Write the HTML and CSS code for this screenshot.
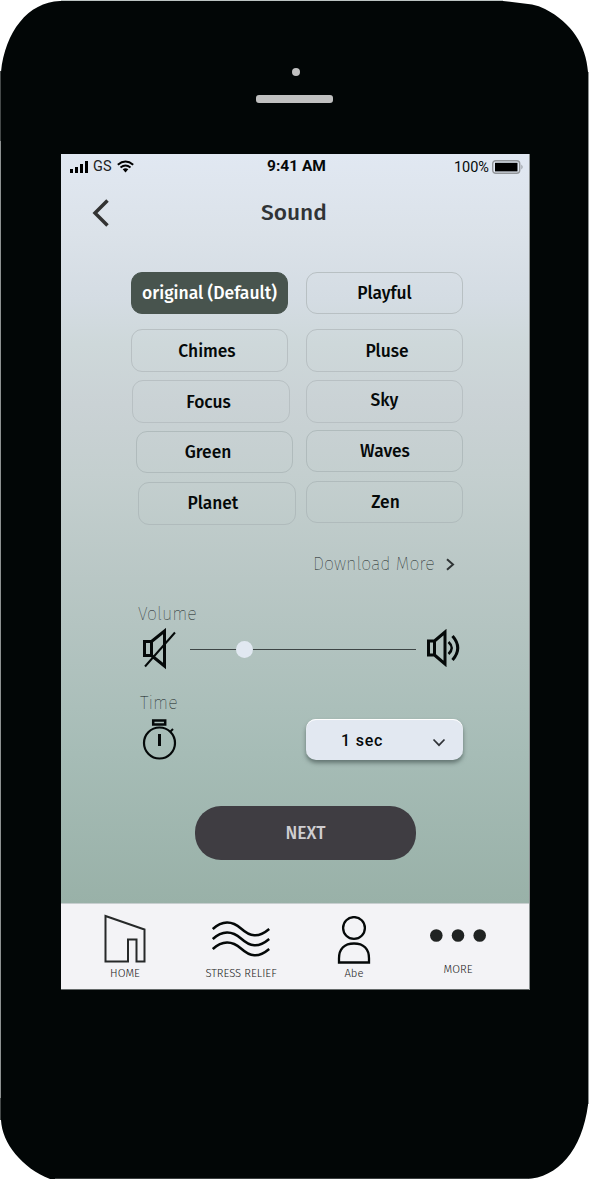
FILE: index.html
```html
<!DOCTYPE html>
<html lang="en">
<head>
<meta charset="utf-8">
<title>Sound</title>
<link rel="stylesheet" href="styles.css">
</head>
<body>
<div class="phone">
  <svg class="shell" viewBox="0 0 589 1179" preserveAspectRatio="none">
    <path fill="#020606" d="M60 1H503L532 4.500Q539 5.500 545 9C572 23 586 45 588 72V1105C582 1150 558 1178 526 1179H50C22 1168 2 1143 1 1120V72C5 32 28 2 60 1Z"/>
    <path d="M61 .5H503" stroke="#bcc3c2"/>
    <path d="M.5 71V141M.5 1098V1120" stroke="#454949"/><path d="M.5 141V1098M588.500 72V1104" stroke="#8d9191"/>
    <path d="M55 1178.500H528" stroke="#3c4040"/>
  </svg>
  <div class="camera"></div>
  <div class="speaker"></div>
  <main class="screen">
    <div class="status">
      <div class="carrier">
        <svg width="18" height="13" viewBox="0 0 18 13"><path d="M0 9h3v4H0zM5 7h3v6H5zM10 4h3v9h-3zM15 1h3v12h-3z"/></svg>
        <span>GS</span>
        <svg width="17" height="13" viewBox="0 0 17 13" fill="none" stroke="#000" stroke-width="2"><path d="M.8 4.700Q8.500-1.700 16.200 4.700M3.500 7.500Q8.500 3.500 13.500 7.500"/><path d="M5.700 9.300Q8.500 7.300 11.300 9.300L8.500 12.500Z" fill="#000" stroke="none"/></svg>
      </div>
      <span class="clock">9:41 AM</span>
      <div class="battery">
        <span>100%</span>
        <svg width="32" height="14" viewBox="0 0 32 14"><rect x=".7" y=".7" width="27" height="12.600" rx="3" fill="none" stroke="#929599" stroke-width="1.400"/><rect x="3" y="2.800" width="22.500" height="8.600"/><path d="M29.500 4.500q2 2.500 0 5z" fill="#858a8d"/></svg>
      </div>
    </div>
    <header class="header">
      <svg width="18" height="28" viewBox="0 0 18 28" fill="none" stroke="#333" stroke-width="3.500"><path d="M15.500 1.500 3 14l12.500 12.500"/></svg>
      <h1>Sound</h1>
    </header>
    <section class="sounds">
      <div class="column">
        <button class="option selected"><span>original (Default)</span></button>
        <button class="option chimes"><span>Chimes</span></button>
        <button class="option focus"><span>Focus</span></button>
        <button class="option green"><span>Green</span></button>
        <button class="option planet"><span>Planet</span></button>
      </div>
      <div class="column right">
        <button class="option playful"><span>Playful</span></button>
        <button class="option pluse"><span>Pluse</span></button>
        <button class="option sky"><span>Sky</span></button>
        <button class="option waves"><span>Waves</span></button>
        <button class="option zen"><span>Zen</span></button>
      </div>
    </section>
    <div class="download"><span>Download More</span><svg width="9" height="13" viewBox="0 0 9 13" fill="none" stroke="#303536" stroke-width="2"><path d="m1 1.200 6 5.300-6 5.300"/></svg></div>
    <div class="label volume-label">Volume</div>
    <div class="volume">
      <svg width="36" height="42" viewBox="0 0 36 42" fill="none" stroke="#050909"><path d="M2.500 13.500h7v14h-7zM9.500 13.500 22.500 3v35L9.500 27.500" stroke-width="3"/><path d="M3 38.500 33 4.500" stroke-width="2"/></svg>
      <div class="track"><i class="thumb"></i></div>
      <svg class="loud" width="36" height="38" viewBox="0 0 36 38" fill="none" stroke="#050909" stroke-width="3"><path d="M2.500 12h6v14h-6zM8.500 12 19 3v32L8.500 26"/><path d="M22.500 13q6.500 6 0 12" stroke-width="2.500"/><path d="M26.500 7q10.500 12 0 24"/></svg>
    </div>
    <div class="label time-label">Time</div>
    <div class="time">
      <svg width="36" height="42" viewBox="0 0 36 42" fill="none" stroke="#050909"><path d="M11.200 1.500h12v4h-12z" stroke-width="2.500"/><circle cx="17.500" cy="24" r="15.500" stroke-width="2.200"/><path d="M17.500 15V27" stroke-width="3"/><path d="m28 13 3-3" stroke-width="2"/></svg>
      <button class="select"><span>1 sec</span><svg width="14" height="9" viewBox="0 0 14 9" fill="none" stroke="#303338" stroke-width="1.700"><path d="m1.500 1.500 5.500 5.700 5.500-5.700"/></svg></button>
    </div>
    <button class="next">NEXT</button>
    <nav class="tabs">
      <a class="tab home"><svg width="42" height="50" viewBox="0 0 42 50" fill="none" stroke="#262929" stroke-width="2"><path d="M1.500 2 40.500 15.500V47.500H32.500V25.500h-8.500V47.500H1.500Z"/></svg><span>HOME</span></a>
      <a class="tab relief"><svg width="58" height="36" viewBox="0 0 58 36" fill="none" stroke="#050909" stroke-width="2.500"><path id="wave" d="M.8 8C10-.5 20-.5 29 7.500S46 17.500 57.200 8"/><use href="#wave" y="10"/><use href="#wave" y="20"/></svg><span>STRESS RELIEF</span></a>
      <a class="tab profile"><svg width="34" height="48" viewBox="0 0 34 48" fill="none" stroke="#050909" stroke-width="2.300"><circle cx="17" cy="12" r="10.900"/><path d="M2 46.500v-4c0-9.500 5.500-15 15-15s15 5.500 15 15v4Z"/></svg><span>Abe</span></a>
      <a class="tab more"><svg width="56" height="13" viewBox="0 0 56 13" fill="#202322"><circle cx="6.300" cy="6.500" r="6.300"/><circle cx="28" cy="6.500" r="6.300"/><circle cx="49.700" cy="6.500" r="6.300"/></svg><span>MORE</span></a>
    </nav>
  </main>
</div>
</body>
</html>
```
FILE: styles.css
```css
* { box-sizing: border-box; }
body { margin: 0; background: #fff; font-family: "Fira Sans", "Noto Sans", sans-serif; color: #050909; }
svg { display: block; flex: none; }
button { font: inherit; color: inherit; border: 0; padding: 0; background: none; }
.phone { position: relative; width: 589px; height: 1179px; display: flex; flex-direction: column; overflow: hidden; isolation: isolate; }
.shell { position: absolute; inset: 0; width: 100%; height: 100%; z-index: -1; }
.camera { width: 8px; height: 8px; border-radius: 50%; background: #c0c0c0; margin: 67.500px 0 0 291.500px; }
.speaker { width: 77px; height: 8px; border-radius: 3px; background: #c0c0c0; margin: 19.500px 0 0 256px; }
.screen { width: 469px; height: 836px; margin: 51px 0 0 61px; display: flex; flex-direction: column; background: linear-gradient(#e1e8f2 0, #dbe2e9 80px, #d4dce3 145px, #ced8da 190px, #cad2d5 250px, #c4cfcf 320px, #b9c7c5 425px, #a6bcb6 600px, #99b1a8 749px); border-right: 1px solid #8b9091; }
.status { height: 24px; display: flex; align-items: center; font-family: Roboto, sans-serif; font-size: 14.500px; padding: 0 5px 0 9px; }
.carrier, .battery { display: flex; align-items: center; gap: 5px; width: 150px; }
.carrier span { color: #222; }
.clock { width: 153px; text-align: center; font-size: 15.500px; font-weight: 700; }
.battery { justify-content: flex-end; gap: 3px; padding-top: 2px; width: 151px; }
.header { display: flex; align-items: center; height: 69px; padding: 1px 0 0 31px; }
.header h1 { margin: 0 0 0 151px; font-size: 22.700px; font-weight: 500; line-height: 28px; color: #303335; }
.sounds { display: flex; gap: 18px; margin: 25px 0 0 70px; height: 253px; }
.column { width: 157px; }
.option { display: flex; align-items: center; justify-content: center; width: 157px; height: 42px; border: 1px solid #b8c0c3; border-radius: 11px; font-size: 17.400px; font-weight: 500; white-space: nowrap; padding-top: 1px; }
.selected { background: #48544e; border-color: #48544e; color: #fff; font-size: 17.500px; }
.chimes, .pluse { height: 43px; margin-top: 15px; }
.focus, .sky { height: 43px; margin-top: 8px; }
.chimes { padding-right: 5px; }
.pluse { padding-left: 1px; padding-right: 0; }
.focus { margin-left: 1px; padding-right: 5px; width: 158px; }
.sky { padding-bottom: 3px; }
.green { margin: 8px 0 0 5px; padding-right: 13px; }
.planet { margin: 9px 0 0 7px; width: 158px; height: 43px; padding: 0 8px 1px 0; }
.waves { margin-top: 7px; padding-left: 1px; }
.pluse { padding-left: 5px; }
.zen { margin-top: 9px; padding-left: 2px; }
.green, .planet, .waves, .zen { border-color: #b0bbbc; }
.download { display: flex; align-items: center; gap: 11px; height: 24px; margin: 27px 0 0 252px; font-weight: 200; font-size: 17.800px; color: #10181a; }
.label { height: 24px; line-height: 24px; font-weight: 200; font-size: 17.800px; color: #10181a; }
.volume-label { margin: 26px 0 0 77px; }
.volume { display: flex; align-items: center; height: 42px; margin: 2px 0 0 81px; }
.track { position: relative; width: 226px; height: 1px; margin-left: 12px; background: #3d4545; }
.thumb { position: absolute; left: 46px; top: -8px; width: 17px; height: 17px; border-radius: 50%; background: #e1e8f1; }
.loud { margin: -2px 0 0 10px; }
.time-label { margin: 21px 0 0 79px; }
.time { display: flex; height: 42px; margin: 4px 0 0 81px; }
.select { display: flex; align-items: center; width: 157px; height: 41px; margin-left: 128px; padding: 2px 17px 0 35px; justify-content: space-between; border-radius: 10px; background: #e2e8f1; box-shadow: inset 0 1px #fff, 0 3px 4px rgba(45,60,58,.55); font: 500 16px Roboto, sans-serif; letter-spacing: .8px; }
.select svg { margin-top: 3px; }
.next { width: 221px; height: 54px; margin: 45px 0 0 134px; border-radius: 26px; background: #3f3d42; color: #cfced1; font-weight: 500; font-size: 17.500px; }
.tabs { display: flex; height: 87px; margin-top: auto; background: #f3f3f6; border-top: 1px solid #c7cecf; border-bottom: 1px solid #656a6a; flex: none; }
.tab { display: flex; flex-direction: column; align-items: center; font-weight: 300; font-size: 11.300px; line-height: 14px; color: #222; white-space: nowrap; }
.home { width: 42px; margin-left: 43px; padding-top: 10px; }
.home span { margin-top: 2px; }
.relief { width: 72px; margin-left: 59px; padding-top: 17px; }
.relief span { margin-top: 9px; }
.profile { width: 34px; margin-left: 60px; padding-top: 12px; }
.profile span { margin-top: 2px; }
.more { width: 56px; margin-left: 59px; padding-top: 25px; }
.more span { margin-top: 20px; }
```
